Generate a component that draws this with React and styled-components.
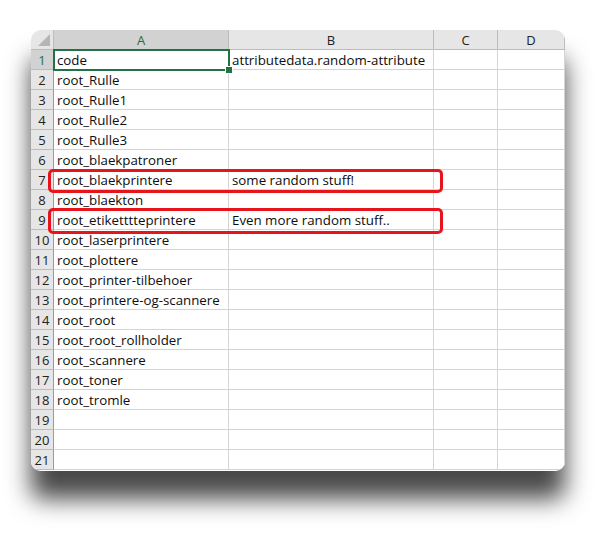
import React from 'react';
import styled, { createGlobalStyle } from 'styled-components';

const GlobalStyle = createGlobalStyle`
  html, body {
    margin: 0;
    padding: 0;
    background: #ffffff;
  }
  body {
    font-family: "Open Sans", "Noto Sans", sans-serif;
  }
`;

const Page = styled.div`
  width: 596px;
  height: 534px;
  padding: 30px 0 0 31px;
  box-sizing: border-box;
`;

const Sheet = styled.div`
  position: relative;
  width: 534px;
  height: 441px;
  border-radius: 10px;
  box-shadow: 0 28px 24px 0 rgba(0, 0, 0, 0.72);
`;

const Grid = styled.div`
  display: grid;
  grid-template-columns: 23px 175px 205px 64px 67px;
  grid-auto-rows: 20px;
  border-radius: 10px;
  overflow: hidden;
  background: #ffffff;
  height: 100%;
`;

const Corner = styled.div`
  position: relative;
  background: #e6e6e6;
  border-right: 1px solid #bcbcbc;
  border-bottom: 1px solid #bcbcbc;
  &::after {
    content: '';
    position: absolute;
    right: 3px;
    bottom: 3px;
    width: 0;
    height: 0;
    border-left: 12px solid transparent;
    border-bottom: 12px solid #b5b5b5;
  }
`;

const ColHead = styled.div`
  background: ${(p) => (p.$active ? '#d2d2d2' : '#e6e6e6')};
  color: ${(p) => (p.$active ? '#1f6f43' : '#222222')};
  border-right: 1px solid #bcbcbc;
  border-bottom: 1px solid ${(p) => (p.$active ? '#217346' : '#bcbcbc')};
  display: flex;
  align-items: center;
  justify-content: center;
  font-size: 13px;
  padding-top: 1px;
  box-sizing: border-box;
  &:last-child {
    border-right: none;
  }
`;

const RowHead = styled.div`
  background: ${(p) => (p.$active ? '#d2d2d2' : '#e6e6e6')};
  color: ${(p) => (p.$active ? '#1f6f43' : '#222222')};
  border-right: 1px solid ${(p) => (p.$active ? '#217346' : '#9a9a9a')};
  border-bottom: 1px solid #bcbcbc;
  display: flex;
  align-items: flex-end;
  justify-content: center;
  line-height: 18px;
  font-size: 13px;
  box-sizing: border-box;
`;

const Cell = styled.div`
  border-right: 1px solid #d4d4d4;
  border-bottom: 1px solid #d4d4d4;
  box-sizing: border-box;
  padding: 0 3px;
  display: flex;
  align-items: flex-end;
  line-height: 18px;
  font-size: 13.3px;
  color: #0d0d0d;
  white-space: nowrap;
  overflow: visible;
`;

const Selection = styled.div`
  position: absolute;
  left: 22px;
  top: 19px;
  width: 177px;
  height: 22px;
  border: 2px solid #217346;
  box-sizing: border-box;
  pointer-events: none;
  &::after {
    content: '';
    position: absolute;
    right: -5px;
    bottom: -5px;
    width: 6px;
    height: 6px;
    background: #217346;
    border: 1px solid #ffffff;
  }
`;

const Highlight = styled.div`
  position: absolute;
  left: 17px;
  width: 395px;
  top: ${(p) => p.$top}px;
  height: ${(p) => p.$height}px;
  border: 3px solid #e8141b;
  border-radius: 5px;
  box-sizing: border-box;
  pointer-events: none;
`;

const rows = [
  ['code', 'attributedata.random-attribute'],
  ['root_Rulle', ''],
  ['root_Rulle1', ''],
  ['root_Rulle2', ''],
  ['root_Rulle3', ''],
  ['root_blaekpatroner', ''],
  ['root_blaekprintere', 'some random stuff!'],
  ['root_blaekton', ''],
  ['root_etiketttteprintere', 'Even more random stuff..'],
  ['root_laserprintere', ''],
  ['root_plottere', ''],
  ['root_printer-tilbehoer', ''],
  ['root_printere-og-scannere', ''],
  ['root_root', ''],
  ['root_root_rollholder', ''],
  ['root_scannere', ''],
  ['root_toner', ''],
  ['root_tromle', ''],
  ['', ''],
  ['', ''],
  ['', ''],
];

const cols = ['A', 'B', 'C', 'D'];

export default function App() {
  return (
    <Page>
      <GlobalStyle />
      <Sheet>
        <Grid>
          <Corner />
          {cols.map((c) => (
            <ColHead key={c} $active={c === 'A'}>{c}</ColHead>
          ))}
          {rows.map((r, i) => (
            <React.Fragment key={i}>
              <RowHead $active={i === 0}>{i + 1}</RowHead>
              <Cell>{r[0]}</Cell>
              <Cell>{r[1]}</Cell>
              <Cell />
              <Cell />
            </React.Fragment>
          ))}
        </Grid>
        <Selection />
        <Highlight $top={139} $height={24} />
        <Highlight $top={178} $height={26} />
      </Sheet>
    </Page>
  );
}
